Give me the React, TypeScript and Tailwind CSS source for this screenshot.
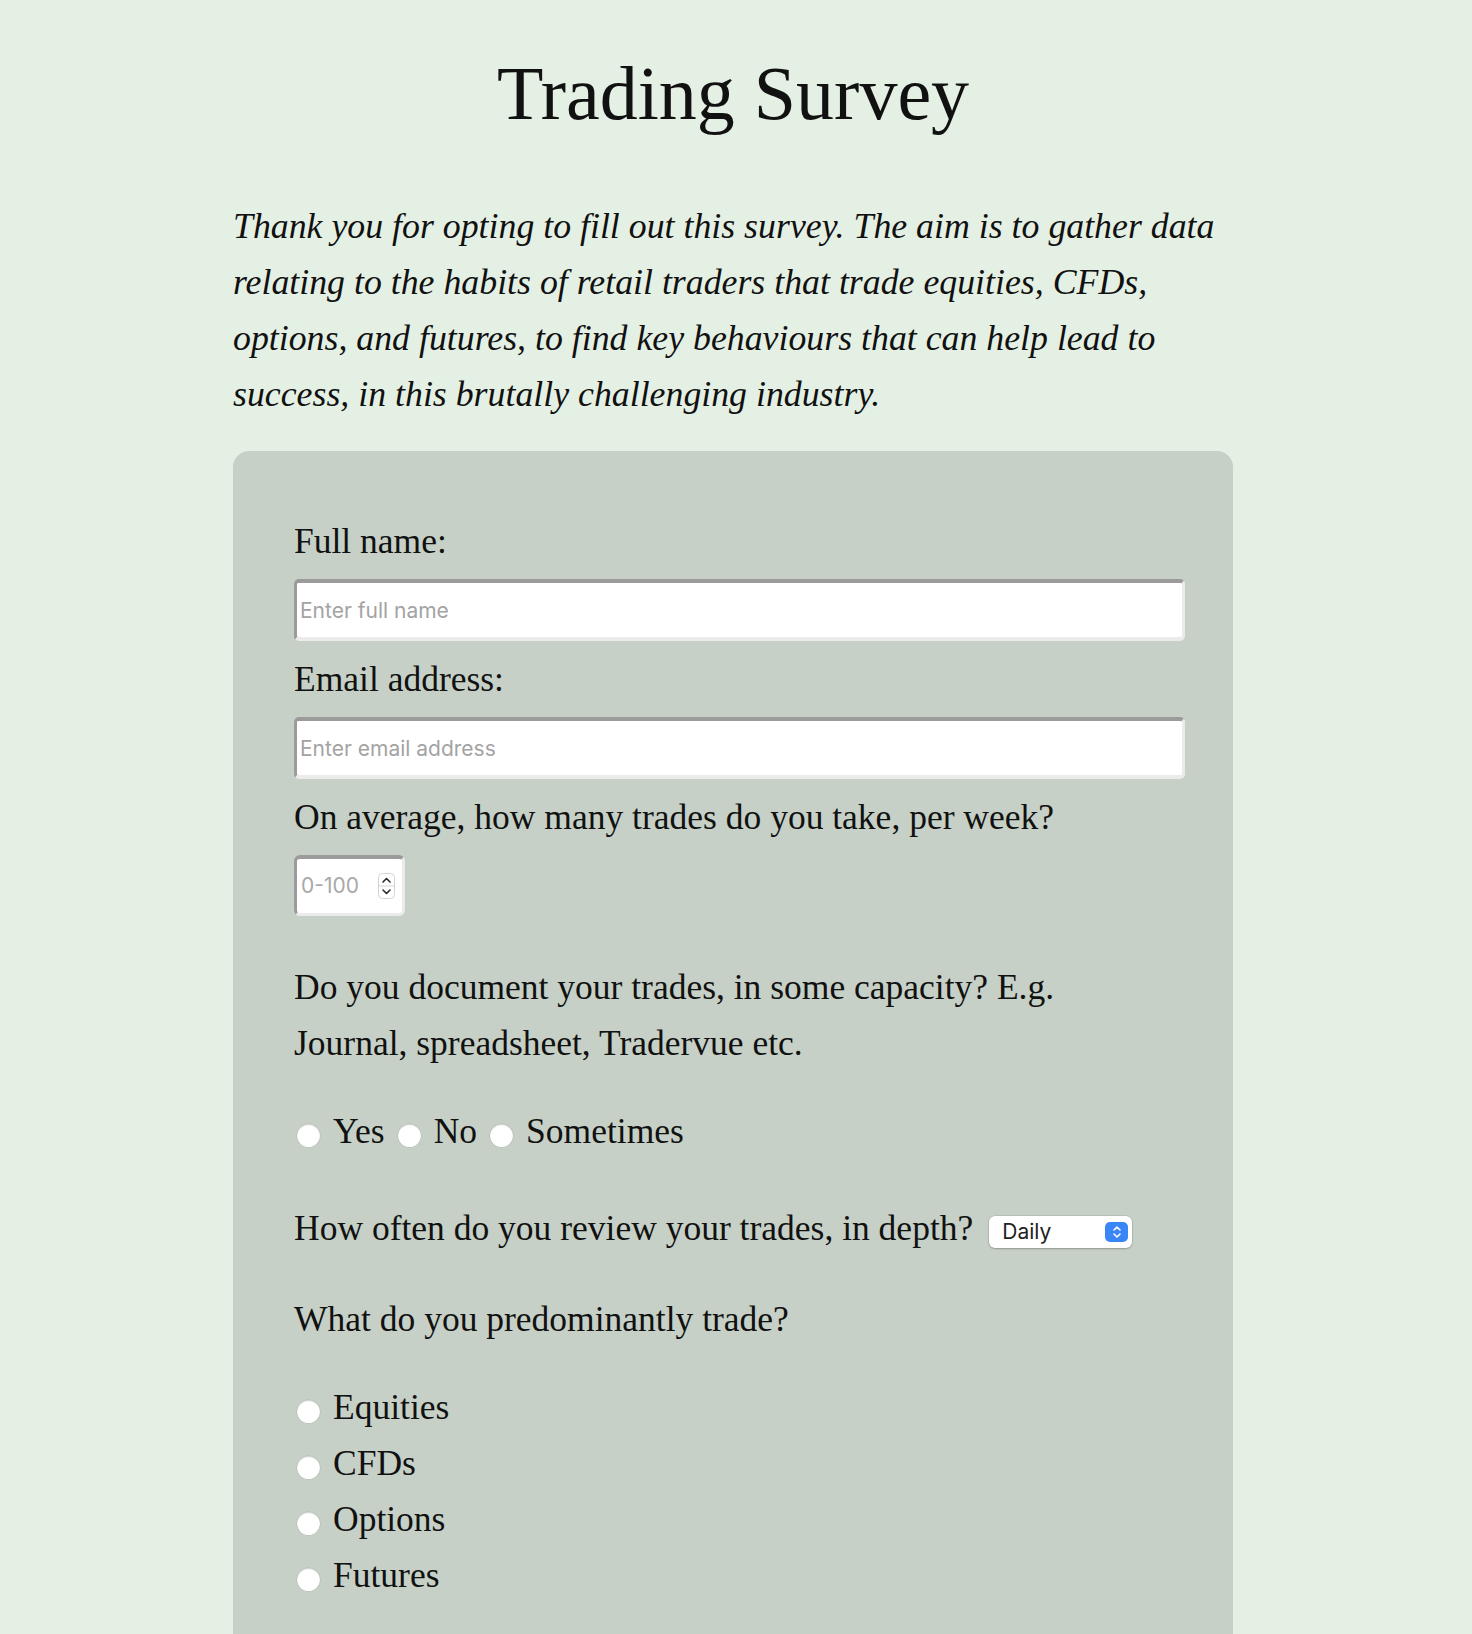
import React from "react";

const serif = "font-['Liberation_Serif',serif]";
const sans = "font-['Inter','Liberation_Sans',sans-serif]";

const inputBox =
  "w-full h-[62px] bg-white rounded-[5px] border-solid border-t-[4px] border-l-[3px] border-b-[4px] border-r-[3px] border-t-[#9b9b9b] border-l-[#9b9b9b] border-b-[#ebebeb] border-r-[#ebebeb]";

const RadioDot: React.FC<{ name: string }> = ({ name }) => (
  <input
    type="radio"
    name={name}
    className="appearance-none w-[23px] h-[23px] mt-[6px] shrink-0 rounded-full bg-white shadow-[inset_0_1px_1px_rgba(0,0,0,0.18),0_0_0_0.5px_rgba(0,0,0,0.1)]"
  />
);

const Label: React.FC<{ children: React.ReactNode; className?: string }> = ({ children, className }) => (
  <p className={`text-[35.5px] leading-[56px] text-[#111] ${className ?? ""}`}>{children}</p>
);

const App: React.FC = () => {
  return (
    <div className={`min-h-screen bg-[#e5f0e4] ${serif} text-[#111]`}>
      <div className="flex flex-col items-center pr-[6px]">
        <h1 className="pt-[49px] text-[76px] leading-[88px] font-normal text-center">Trading Survey</h1>

        <p className="w-[1000px] mt-[61px] text-[35.8px] leading-[56px] italic">
          Thank you for opting to fill out this survey. The aim is to gather data
          <br />
          relating to the habits of retail traders that trade equities, CFDs,
          <br />
          options, and futures, to find key behaviours that can help lead to
          <br />
          success, in this brutally challenging industry.
        </p>

        <form className="w-[1000px] mt-[29px] bg-[#c6d0c6] rounded-t-[16px] pt-[62px] pl-[61px] pr-[48px] pb-[30px]">
          <Label className="mb-[10px]">Full name:</Label>
          <input
            type="text"
            placeholder="Enter full name"
            className={`${inputBox} ${sans} block pl-[3px] text-[21px] outline-none placeholder:text-[#a3a3a3]`}
          />

          <Label className="mt-[10px] mb-[10px]">Email address:</Label>
          <input
            type="email"
            placeholder="Enter email address"
            className={`${inputBox} ${sans} block pl-[3px] text-[21px] outline-none placeholder:text-[#a3a3a3]`}
          />

          <Label className="mt-[10px] mb-[10px]">On average, how many trades do you take, per week?</Label>
          <div className="flex items-center w-[111px] h-[61px] bg-white rounded-[6px] border-solid border-t-[4px] border-l-[3px] border-b-[3px] border-r-[3px] border-t-[#9b9b9b] border-l-[#9b9b9b] border-b-[#ebebeb] border-r-[#ebebeb] pl-[4px] pr-[7px]">
            <input
              type="text"
              placeholder="0-100"
              className={`${sans} w-[70px] text-[21px] outline-none placeholder:text-[#a8a8a8]`}
            />
            <svg width="17" height="26" viewBox="0 0 17 26" className="ml-auto">
              <rect x="0.5" y="0.5" width="16" height="25" rx="4" fill="#fff" stroke="#d4d4d4" />
              <line x1="1" y1="13" x2="16" y2="13" stroke="#d4d4d4" />
              <path d="M5 9 L8.5 5.5 L12 9" fill="none" stroke="#2a2a2a" strokeWidth="1.6" strokeLinecap="round" strokeLinejoin="round" />
              <path d="M5 17 L8.5 20.5 L12 17" fill="none" stroke="#2a2a2a" strokeWidth="1.6" strokeLinecap="round" strokeLinejoin="round" />
            </svg>
          </div>

          <Label className="mt-[43px]">
            Do you document your trades, in some capacity? E.g.
            <br />
            Journal, spreadsheet, Tradervue etc.
          </Label>

          <div className="mt-[33px] flex items-center h-[56px] text-[35.5px]">
            <label className="flex items-center">
              <span className="ml-[3px] flex"><RadioDot name="doc" /></span>
              <span className="ml-[13px]">Yes</span>
            </label>
            <label className="flex items-center ml-[13px]">
              <RadioDot name="doc" />
              <span className="ml-[13px]">No</span>
            </label>
            <label className="flex items-center ml-[13px]">
              <RadioDot name="doc" />
              <span className="ml-[13px]">Sometimes</span>
            </label>
          </div>

          <div className="mt-[40px] flex items-center h-[56px] gap-[16px]">
            <Label>How often do you review your trades, in depth?</Label>
            <div className="mt-[8px] flex items-center w-[143px] h-[32px] bg-white rounded-[6px] shadow-[0_0_0_0.5px_rgba(0,0,0,0.12),0_1px_2px_rgba(0,0,0,0.22)] pl-[13px] pr-[4px]">
              <span className={`${sans} text-[21px] text-[#222]`}>Daily</span>
              <span className="ml-auto flex items-center justify-center w-[23px] h-[20px] rounded-[5px] bg-[#3a86f7]">
                <svg width="10" height="14" viewBox="0 0 10 14">
                  <path d="M2 5 L5 2 L8 5" fill="none" stroke="#fff" strokeWidth="1.6" strokeLinecap="round" strokeLinejoin="round" />
                  <path d="M2 9 L5 12 L8 9" fill="none" stroke="#fff" strokeWidth="1.6" strokeLinecap="round" strokeLinejoin="round" />
                </svg>
              </span>
            </div>
          </div>

          <Label className="mt-[35px]">What do you predominantly trade?</Label>

          <div className="mt-[33px] flex flex-col">
            {["Equities", "CFDs", "Options", "Futures"].map((item) => (
              <label key={item} className="flex items-center h-[56px] text-[35.5px]">
                <span className="ml-[3px] flex"><RadioDot name="asset" /></span>
                <span className="ml-[13px]">{item}</span>
              </label>
            ))}
          </div>
        </form>
      </div>
    </div>
  );
};

export default App;
